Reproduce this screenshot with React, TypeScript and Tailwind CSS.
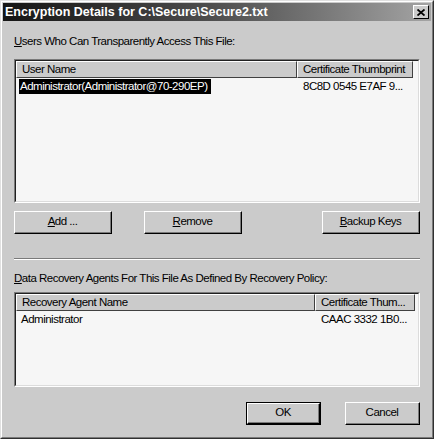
import React from 'react';

const FONT = { fontFamily: '"Liberation Sans", Arial, sans-serif' };

function Btn({ children, w, isDefault }: { children: React.ReactNode; w: string; isDefault?: boolean }) {
  return (
    <div className={`${w} h-[23px] ${isDefault ? 'border border-black' : ''}`}>
      <div className="w-full h-full border-t border-l border-white border-r border-b border-r-black border-b-black">
        <div className="w-full h-full border-r border-b border-[#7a7a7a] flex items-center justify-center text-[11.5px] tracking-[-0.5px] text-black bg-[#cbcbcb]">
          {children}
        </div>
      </div>
    </div>
  );
}

function HeaderCell({ children, w }: { children: React.ReactNode; w: string }) {
  return (
    <div className={`${w} h-[17px] border-t border-l border-white border-r border-b border-r-[#404040] border-b-[#404040] bg-[#cbcbcb] flex items-center pl-[5px] text-[11.5px] tracking-[-0.5px] text-black whitespace-nowrap overflow-hidden`}>
      {children}
    </div>
  );
}

function ListBox({ h, children }: { h: string; children: React.ReactNode }) {
  return (
    <div className={`${h} border-t border-l border-[#7a7a7a] border-r border-b border-r-white border-b-white`}>
      <div className="w-full h-full border-t border-l border-[#202020] border-r border-b border-r-[#dcdcdc] border-b-[#dcdcdc] bg-[#f6f6f6] overflow-hidden">
        {children}
      </div>
    </div>
  );
}

export default function App() {
  return (
    <div className="w-[434px] h-[439px] bg-[#cbcbcb] relative" style={FONT}>
      <div className="w-full h-full border-t border-l border-[#e0e0e0] border-r border-b border-r-[#303030] border-b-[#303030]">
        <div className="w-full h-full border-t border-l border-white border-r border-b border-r-[#7a7a7a] border-b-[#7a7a7a] px-[1px] pt-[1px]">
          {/* Title bar */}
          <div className="h-[18px] bg-gradient-to-r from-[#151515] via-[#505050] to-[#a4a4a4] flex items-center justify-between pl-[2px] pr-[2px]">
            <span className="text-white font-bold text-[12.5px] leading-none">
              Encryption Details for C:\Secure\Secure2.txt
            </span>
            <div className="w-[16px] h-[14px] bg-[#cbcbcb] border-t border-l border-white border-r border-b border-r-black border-b-black flex items-center justify-center">
              <svg width="8" height="7" viewBox="0 0 8 7">
                <path d="M0.5 0.5 L7.5 6.5 M7.5 0.5 L0.5 6.5" stroke="black" strokeWidth="1.8" />
              </svg>
            </div>
          </div>

          <div className="px-[11px] text-[11.5px] tracking-[-0.5px]">
            <div className="mt-[13px] h-[14px] leading-[14px] text-black">
              <span className="underline">U</span>sers Who Can Transparently Access This File:
            </div>

            <div className="mt-[11px]">
              <ListBox h="h-[144px]">
                <div className="flex">
                  <HeaderCell w="w-[281px]">User Name</HeaderCell>
                  <HeaderCell w="w-[116px]">Certificate Thumbprint</HeaderCell>
                </div>
                <div className="flex h-[16px] items-center mt-[1px]">
                  <div className="w-[281px] pl-[3px]">
                    <span className="bg-black text-white px-[1px] pr-[4px] inline-block leading-[15px]">
                      Administrator(Administrator@70-290EP)
                    </span>
                  </div>
                  <div className="pl-[6px] text-black whitespace-nowrap">8C8D 0545 E7AF 9...</div>
                </div>
              </ListBox>
            </div>

            <div className="mt-[8px] flex justify-between">
              <div className="flex gap-[32px]">
                <Btn w="w-[98px]">
                  <span><span className="underline">A</span>dd ...</span>
                </Btn>
                <Btn w="w-[98px]">
                  <span><span className="underline">R</span>emove</span>
                </Btn>
              </div>
              <Btn w="w-[98px]">
                <span><span className="underline">B</span>ackup Keys</span>
              </Btn>
            </div>

            <div className="mt-[24px] border-t border-[#7a7a7a] border-b border-b-white" />

            <div className="mt-[11px] h-[14px] leading-[14px] text-black">
              <span className="underline">D</span>ata Recovery Agents For This File As Defined By Recovery Policy:
            </div>

            <div className="mt-[7px]">
              <ListBox h="h-[95px]">
                <div className="flex">
                  <HeaderCell w="w-[299px]">Recovery Agent Name</HeaderCell>
                  <HeaderCell w="w-[100px]">Certificate Thum...</HeaderCell>
                </div>
                <div className="flex h-[16px] items-center mt-[1px] text-black">
                  <div className="w-[299px] pl-[5px]">Administrator</div>
                  <div className="pl-[6px] whitespace-nowrap">CAAC 3332 1B0...</div>
                </div>
              </ListBox>
            </div>

            <div className="mt-[15px] flex justify-end gap-[24px]">
              <Btn w="w-[75px]" isDefault>OK</Btn>
              <Btn w="w-[75px]">Cancel</Btn>
            </div>
          </div>
        </div>
      </div>
    </div>
  );
}
